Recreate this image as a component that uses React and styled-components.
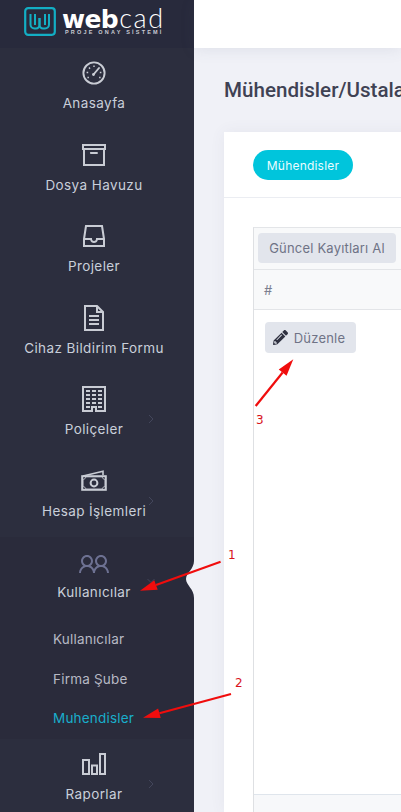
import React from "react";
import styled, { createGlobalStyle } from "styled-components";
import {
  LiaArchiveSolid,
  LiaInboxSolid,
  LiaFileAltSolid,
  LiaBuildingSolid,
  LiaUserFriendsSolid,
} from "react-icons/lia";
import { FaPencilAlt } from "react-icons/fa";

const Global = createGlobalStyle`
  html, body { margin: 0; padding: 0; background: #f0f1f7; }
  body { font-family: Inter, "Noto Sans", sans-serif; overflow: hidden; }
  * { box-sizing: border-box; }
`;

const Page = styled.div`
  position: relative;
  display: flex;
  width: 401px;
  height: 812px;
  overflow: hidden;
  background: #f0f1f7;
`;

const Sidebar = styled.aside`
  flex: none;
  width: 194px;
  height: 812px;
  background: #2c2e3e;
  display: flex;
  flex-direction: column;
`;

const Brand = styled.div`
  height: 48px;
  flex: none;
  background: #282a3c;
  display: flex;
  align-items: flex-start;
  padding: 7px 0 0 24px;
  gap: 6px;
`;

const BrandText = styled.div`
  display: flex;
  flex-direction: column;
  color: #fff;
`;

const BrandName = styled.div`
  font-family: "DejaVu Sans", sans-serif;
  font-size: 25px;
  line-height: 22px;
  height: 22px;
  letter-spacing: -0.6px;
  font-weight: 700;
  white-space: nowrap;
  & > span {
    font-weight: 300;
    font-family: Lato, sans-serif;
    font-size: 27px;
    letter-spacing: 1.6px;
    margin-left: 1px;
  }
`;

const BrandSub = styled.div`
  font-family: "Liberation Sans", sans-serif;
  font-size: 5.5px;
  line-height: 7px;
  font-weight: 700;
  letter-spacing: 2.2px;
  color: #c9cad3;
  margin: 0 0 0 3px;
  white-space: nowrap;
`;

const Item = styled.div`
  position: relative;
  flex: none;
  height: 81.5px;
  padding: ${(p) => (p.$open ? "11px" : "9px")} 6px 0 0;
  display: flex;
  flex-direction: column;
  align-items: center;
  color: ${(p) => (p.$muted ? "#6d7192" : "#c9ccd4")};
  background: ${(p) => (p.$open ? "#2a2b3b" : "transparent")};
`;

const IconSlot = styled.div`
  width: 32px;
  height: 32px;
  font-size: 32px;
  line-height: 0;
  display: flex;
  align-items: center;
  justify-content: center;
`;

const Label = styled.div`
  margin-top: ${(p) => (p.$tight ? "3px" : "5px")};
  font-size: 13.5px;
  line-height: 18px;
  letter-spacing: 0.4px;
  color: #c9cfda;
  white-space: nowrap;
`;

const Chevron = styled.svg`
  position: absolute;
  left: 147px;
  top: ${(p) => p.$top}px;
  width: 8px;
  height: 10px;
  fill: none;
  stroke: #43465b;
  stroke-width: 1;
`;

const SubList = styled.div`
  flex: none;
  background: #2a2b3b;
  height: 120.5px;
  padding-top: 1px;
  display: flex;
  flex-direction: column;
`;

const SubItem = styled.div`
  height: 39.5px;
  flex: none;
  padding-left: 53px;
  display: flex;
  align-items: center;
  font-size: 13.5px;
  letter-spacing: 0.2px;
  color: ${(p) => (p.$active ? "#19aecb" : "#b7b9c4")};
`;

const Notch = styled.svg`
  position: absolute;
  left: 185px;
  top: 561px;
  width: 9px;
  height: 37px;
`;

const Main = styled.main`
  flex: 1;
  min-width: 0;
  display: flex;
  flex-direction: column;
`;

const TopBar = styled.header`
  flex: none;
  height: 48px;
  background: #fff;
  box-shadow: 0 2px 14px rgba(80, 85, 120, 0.1);
`;

const Title = styled.h1`
  margin: 30px 0 0 30px;
  height: 24px;
  font-family: Roboto, sans-serif;
  font-size: 20.6px;
  line-height: 24px;
  font-weight: 500;
  color: #3f4254;
  white-space: nowrap;
`;

const Card = styled.section`
  margin: 30px 0 0 30px;
  width: 500px;
  flex: 1;
  background: #fff;
  box-shadow: 0 0 14px rgba(80, 85, 120, 0.07);
  display: flex;
  flex-direction: column;
`;

const CardHead = styled.div`
  flex: none;
  height: 66px;
  padding: 18px 0 0 29px;
  border-bottom: 1px solid #ebedf2;
`;

const Pill = styled.span`
  display: inline-flex;
  align-items: center;
  justify-content: center;
  width: 100px;
  height: 30px;
  border-radius: 15px;
  background: #00c5dc;
  color: #eafcff;
  font-size: 12px;
  letter-spacing: 0.2px;
`;

const CardBody = styled.div`
  flex: 1;
  padding: 29px 0 0 29px;
  display: flex;
`;

const Table = styled.div`
  width: 100%;
  border-left: 1px solid #dee0e3;
  border-top: 1px solid #e3e5e8;
  display: flex;
  flex-direction: column;
`;

const ToolRow = styled.div`
  flex: none;
  height: 42px;
  padding: 5px 0 0 4px;
  background: #f8f9fa;
  border-bottom: 1px solid #e3e5e8;
`;

const GreyButton = styled.span`
  display: inline-flex;
  align-items: center;
  justify-content: center;
  gap: 6px;
  width: ${(p) => p.$w}px;
  height: ${(p) => p.$h}px;
  padding-right: ${(p) => p.$pr || 0}px;
  background: #e2e5ec;
  border-radius: 4px;
  color: #6f7386;
  font-size: 13px;
  letter-spacing: 0.2px;
  white-space: nowrap;
`;

const HeadRow = styled.div`
  flex: none;
  height: 40px;
  padding-left: 10px;
  display: flex;
  align-items: center;
  background: #f8f9fa;
  border-bottom: 1px solid #e3e5e8;
  color: #7b7f90;
  font-size: 13px;
`;

const BodyRow = styled.div`
  flex: 1;
  padding: 12px 0 0 11px;
`;

const Foot = styled.div`
  flex: none;
  height: 18px;
  background: #f7f8fa;
  border-top: 1px solid #dfe5ec;
`;

const Overlay = styled.svg`
  position: absolute;
  left: 0;
  top: 0;
  width: 401px;
  height: 812px;
  pointer-events: none;
`;

const Mark = styled.span`
  position: absolute;
  left: ${(p) => p.$x}px;
  top: ${(p) => p.$y}px;
  font-family: "DejaVu Sans", sans-serif;
  font-size: 12px;
  line-height: 14px;
  color: #d8131b;
`;

const Logo = () => (
  <svg width="32" height="29" viewBox="0 0 32 29" fill="none" stroke="#13aec4">
    <rect x="1.2" y="1.2" width="29.6" height="26.6" rx="3" strokeWidth="2.2" />
    <path d="M6.5 7v10.5a4 4 0 0 0 4 4h1.5a3.5 3.5 0 0 0 3.5-3.5V11" strokeWidth="2" />
    <path d="M11 7v11M21 7v11" strokeWidth="2" />
    <path d="M15.5 11v7a3.5 3.5 0 0 0 3.5 3.5h2a4 4 0 0 0 4-4V7" strokeWidth="2" />
  </svg>
);

const Gauge = () => (
  <svg width="24" height="24" viewBox="0 0 24 24" fill="none" stroke="#c9ccd4">
    <circle cx="12" cy="12" r="10.6" strokeWidth="1.9" />
    <path d="M11.5 13.5L17 7" strokeWidth="1.9" strokeLinecap="round" />
    <circle cx="11.5" cy="13.5" r="1.4" fill="#c9ccd4" stroke="none" />
    <path
      d="M12 4.5v1.6M7 6.5l1 1.2M4.6 11.5h1.6M5.4 16.5h1.5M19.4 11.5h-1.6M18.6 16.5h-1.5"
      strokeWidth="1.4"
    />
  </svg>
);

const Bills = () => (
  <svg width="26" height="21" viewBox="0 0 26 21" fill="none" stroke="#c9ccd4">
    <path d="M2 6L22 1.2V5" strokeWidth="1.6" />
    <rect x="1.2" y="6.2" width="23.6" height="13.6" strokeWidth="2" />
    <circle cx="13" cy="13" r="3.4" strokeWidth="2" />
    <path d="M2 9.5a3.4 3.4 0 0 0 3-2.8h16a3.4 3.4 0 0 0 3 2.8v7a3.4 3.4 0 0 0-3 2.6H5a3.4 3.4 0 0 0-3-2.6Z" strokeWidth="0.8" />
  </svg>
);

const Bars = () => (
  <svg width="24" height="22" viewBox="0 0 24 22" fill="none" stroke="#c9ccd4" strokeWidth="2">
    <rect x="1" y="7" width="6" height="14" />
    <rect x="10" y="12.5" width="5" height="8.5" />
    <rect x="18" y="1" width="5" height="20" />
  </svg>
);

const Right = ({ top }) => (
  <Chevron $top={top} viewBox="0 0 8 10"><path d="M2 1l4 4-4 4" /></Chevron>
);

const Arrow = ({ x1, y1, x2, y2 }) => {
  const a = Math.atan2(y2 - y1, x2 - x1);
  const len = 17;
  const w = 5;
  const bx = x2 - Math.cos(a) * len;
  const by = y2 - Math.sin(a) * len;
  const nx = -Math.sin(a) * w;
  const ny = Math.cos(a) * w;
  return (
    <g>
      <line x1={x1} y1={y1} x2={bx} y2={by} stroke="#f00d0d" strokeWidth="2.2" />
      <polygon points={`${x2},${y2} ${bx + nx},${by + ny} ${bx - nx},${by - ny}`} fill="#f00d0d" />
    </g>
  );
};

const items = [
  { icon: <Gauge />, label: "Anasayfa" },
  { icon: <LiaArchiveSolid />, label: "Dosya Havuzu" },
  { icon: <LiaInboxSolid />, label: "Projeler" },
  { icon: <LiaFileAltSolid />, label: "Cihaz Bildirim Formu" },
  { icon: <LiaBuildingSolid />, label: "Poliçeler", more: true },
  { icon: <Bills />, label: "Hesap İşlemleri", more: true },
];

export default function App() {
  return (
    <Page>
      <Global />
      <Sidebar>
        <Brand>
          <Logo />
          <BrandText>
            <BrandName>web<span>cad</span></BrandName>
            <BrandSub>PROJE ONAY SİSTEMİ</BrandSub>
          </BrandText>
        </Brand>
        {items.map((it) => (
          <Item key={it.label}>
            <IconSlot>{it.icon}</IconSlot>
            <Label>{it.label}</Label>
            {it.more && <Right top={40} />}
          </Item>
        ))}
        <Item $muted $open>
          <IconSlot><LiaUserFriendsSolid /></IconSlot>
          <Label $tight>Kullanıcılar</Label>
          <Chevron $top={39} viewBox="0 0 8 10"><path d="M0.5 3l3.5 3.5L7.5 3" /></Chevron>
        </Item>
        <SubList>
          <SubItem>Kullanıcılar</SubItem>
          <SubItem>Firma Şube</SubItem>
          <SubItem $active>Muhendisler</SubItem>
        </SubList>
        <Item>
          <IconSlot><Bars /></IconSlot>
          <Label>Raporlar</Label>
          <Right top={40} />
        </Item>
      </Sidebar>
      <Notch viewBox="0 0 9 37">
        <path d="M9 0C9 8 1 12 1 18c0 6 8 10 8 19Z" fill="#f0f1f7" />
      </Notch>
      <Main>
        <TopBar />
        <Title>Mühendisler/Ustalar</Title>
        <Card>
          <CardHead><Pill>Mühendisler</Pill></CardHead>
          <CardBody>
            <Table>
              <ToolRow><GreyButton $w={138} $h={30}>Güncel Kayıtları Al</GreyButton></ToolRow>
              <HeadRow>#</HeadRow>
              <BodyRow>
                <GreyButton $w={91} $h={31} $pr={3}>
                  <FaPencilAlt color="#2f3140" size={15} />
                  Düzenle
                </GreyButton>
              </BodyRow>
              <Foot />
            </Table>
          </CardBody>
        </Card>
      </Main>
      <Overlay viewBox="0 0 401 812">
        <Arrow x1={220.6} y1={561.7} x2={140} y2={590.7} />
        <Arrow x1={231} y1={694} x2={143} y2={717.7} />
        <Arrow x1={255.7} y1={406} x2={293.3} y2={359.3} />
      </Overlay>
      <Mark $x={228} $y={548}>1</Mark>
      <Mark $x={235} $y={676}>2</Mark>
      <Mark $x={256} $y={413}>3</Mark>
    </Page>
  );
}
